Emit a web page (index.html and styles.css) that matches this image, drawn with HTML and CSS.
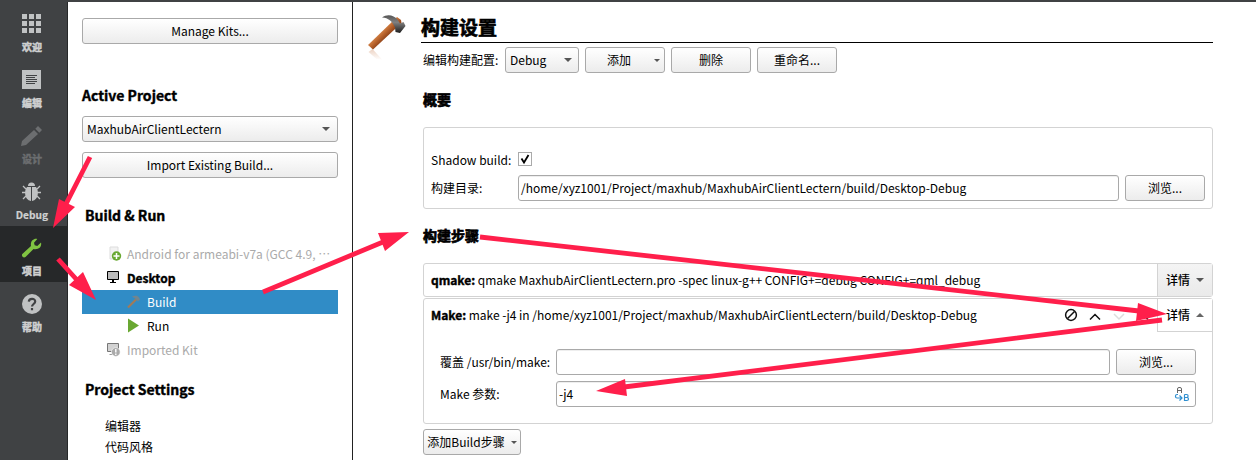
FILE: index.html
```html
<!DOCTYPE html>
<html lang="zh-CN">
<head>
<meta charset="utf-8">
<title>构建设置</title>
<link rel="stylesheet" href="styles.css">
</head>
<body>
<div class="window">
  <nav class="modes">
    <div class="mode"><svg width="20" height="20" viewBox="0 0 20 20" fill="#c0c2c3"><path d="M0 0h5v5H0zM7 0h5v5H7zM14 0h5v5h-5zM0 7h5v5H0zM7 7h5v5H7zM14 7h5v5h-5zM0 14h5v5H0zM7 14h5v5H7zM14 14h5v5h-5z"/></svg><span>欢迎</span></div>
    <div class="mode"><svg width="20" height="20" viewBox="0 0 20 20"><path fill="#c0c2c3" d="M0 0h19v19H0z"/><path stroke="#404244" d="M4 5.500h11M4 7.500h9M4 9.500h11M4 11.500h11M4 13.500h9"/></svg><span>编辑</span></div>
    <div class="mode disabled"><svg width="20" height="20" viewBox="0 0 20 20" fill="#6c6e70"><path d="M12 4l4 4L4 19l-5 1 1-5zM13.300 2.700L16 0l4 4-2.700 2.700z"/></svg><span>设计</span></div>
    <div class="mode"><svg width="20" height="20" viewBox="0 0 20 20"><path stroke="#c0c2c3" stroke-width="1.300" fill="none" d="M4 7L1 4M15 7l3-3M4 10.500H0M15 10.500h4M4 14l-3 3M15 14l3 3"/><path fill="#c0c2c3" d="M6 4a3.500 3.500 0 0 1 7 0zM9 5v14C2 18 2 8 5 5zM10 5v14c7-1 7-11 4-14z"/></svg><span class="latin">Debug</span></div>
    <div class="mode active"><svg width="20" height="20" viewBox="0 0 20 20"><path fill="#80c342" d="M19 4.500L15.300 8l-2.600-.7L12 4.700 15.300 1C12 0 8 3 9 8L.3 16C-1 18 1.500 20.500 3.500 19L11.500 11C17 12 20 8.500 19 4.500z"/></svg><span>项目</span></div>
    <div class="mode"><svg width="20" height="20" viewBox="0 0 20 20"><circle cx="10" cy="10" r="10" fill="#c0c2c3"/><path d="M6.800 7.600C7 3.800 13.300 4 13.200 7.500c0 2.400-3.200 2.600-3.200 5M10 14v2.200" fill="none" stroke="#404244" stroke-width="2.200"/></svg><span>帮助</span></div>
  </nav>

  <aside class="panel">
    <div class="button manage">Manage Kits...</div>
    <h2 class="head-active">Active Project</h2>
    <div class="button combo"><span>MaxhubAirClientLectern</span><i class="down"></i></div>
    <div class="button import">Import Existing Build...</div>
    <h2 class="head-run">Build &amp; Run</h2>
    <div class="tree">
      <div class="row muted"><svg width="16" height="16" viewBox="0 0 16 16"><path d="M3 1h8v12H3z" fill="#f2f2f2" stroke="#ddd"/><circle cx="9.500" cy="10" r="4.700" fill="#69a832"/><path d="M6.500 10h6M9.500 7v6" stroke="#fff" stroke-width="1.500"/></svg><span>Android for armeabi-v7a (GCC 4.9, ⋯</span></div>
      <div class="row strong"><svg width="16" height="16" viewBox="0 0 16 16"><path d="M.5 1.500h11v8H.5z" fill="#bbb" stroke="#000"/><path d="M5 10h2v2h2v1H3v-1h2z"/></svg><span>Desktop</span></div>
      <div class="row child selected"><svg width="16" height="16" viewBox="0 0 16 16"><path d="M1 13.500L9 5.500" stroke="#a07a58" stroke-width="2.200"/><path d="M5 2.500c3-1.500 6-1 7 1l1 2-2 2-3-3z" fill="#72858e"/></svg><span>Build</span></div>
      <div class="row child"><svg width="16" height="16" viewBox="0 0 16 16"><path d="M1 .5l11 7L1 14.500z" fill="#69a832"/></svg><span>Run</span></div>
      <div class="row muted"><svg width="16" height="16" viewBox="0 0 16 16"><path d="M.5 1.500h11v8H.5z" fill="#d2d2d2" stroke="#777"/><path d="M2.500 12.500h4" stroke="#999"/><circle cx="8.800" cy="10" r="4.400" fill="#aaa" stroke="#fff" stroke-width=".6"/><path d="M8.800 7v3.500M8.800 11.500V13" stroke="#fff" stroke-width="1.400"/></svg><span>Imported Kit</span></div>
    </div>
    <h2 class="head-settings">Project Settings</h2>
    <div class="setting">编辑器</div>
    <div class="setting">代码风格</div>
  </aside>

  <main class="main">
    <svg class="hammer" width="40" height="50" viewBox="0 0 40 50">
      <defs><linearGradient id="wood" gradientUnits="userSpaceOnUse" x1="14" y1="16" x2="20" y2="22"><stop offset="0" stop-color="#d88a50"/><stop offset=".5" stop-color="#bd682f"/><stop offset="1" stop-color="#96481c"/></linearGradient>
      <linearGradient id="steel" x1="0" y1="0" x2="0" y2="1"><stop offset="0" stop-color="#555"/><stop offset=".4" stop-color="#808080"/><stop offset="1" stop-color="#1c1c1c"/></linearGradient>
      <linearGradient id="fade" x1="0" y1="0" x2="0" y2="1"><stop offset="0" stop-color="#ecd2c2"/><stop offset="1" stop-color="#fff"/></linearGradient></defs>
      <path d="M1.500 38l4-3 10 11-6-1z" fill="url(#fade)"/>
      <path d="M30 3l4 3 .5 3L6 35.500 1 31z" fill="url(#wood)"/>
      <path d="M15 3.500C20-.5 27 1 30.500 5.500l2.500 4 3.500-1.500 2 4-5.500 7-4.500-1-.5-4.500C25 7 21.500 4 15 3.500z" fill="url(#steel)"/>
    </svg>
    <div class="content">
      <h1>构建设置</h1>
      <div class="config">
        <span class="config-label">编辑构建配置:</span>
        <div class="button config-combo"><span>Debug</span><i class="down"></i></div>
        <div class="button add"><span>添加</span><i class="down small"></i></div>
        <div class="button std">删除</div>
        <div class="button std">重命名...</div>
      </div>
      <h3 class="head-summary">概要</h3>
      <section class="box summary">
        <div class="line shadow"><label class="field-label">Shadow build:</label><span class="check"><svg width="12" height="12" viewBox="0 0 12 12"><path d="M2.500 5.500l2.500 4L9.500 2" fill="none" stroke="#000" stroke-width="1.800"/></svg></span></div>
        <div class="line"><label class="field-label">构建目录:</label><div class="input">/home/xyz1001/Project/maxhub/MaxhubAirClientLectern/build/Desktop-Debug</div><div class="button std">浏览...</div></div>
      </section>
      <h3 class="head-steps">构建步骤</h3>
      <section class="box step">
        <div class="step-text"><b>qmake:</b> <span>qmake MaxhubAirClientLectern.pro -spec linux-g++ CONFIG+=debug CONFIG+=qml_debug</span></div>
        <div class="detail"><span>详情</span><i class="down"></i></div>
      </section>
      <section class="box make">
        <div class="make-head">
          <div class="step-text"><b>Make:</b> <span>make -j4 in /home/xyz1001/Project/maxhub/MaxhubAirClientLectern/build/Desktop-Debug</span></div>
          <svg class="tools" width="86" height="16" viewBox="0 0 86 16" fill="none" stroke="#111" stroke-width="1.500"><circle cx="7" cy="7" r="5.400"/><path d="M3.500 10.500l7-7M26 11.500l5-5 5 5M74 11.500l5-5 5 5"/><path d="M50 6l5 5 5-5" stroke="#ddd"/></svg>
          <div class="detail open"><span>详情</span><i class="up"></i></div>
        </div>
        <div class="make-line"><label>覆盖 /usr/bin/make:</label><div class="input"></div><div class="button std">浏览...</div></div>
        <div class="make-line"><label>Make 参数:</label><div class="input args"><span>-j4</span><svg width="16" height="16" viewBox="0 0 16 16" fill="none"><path d="M3.500 7V3q0-1.500 1.500-1.500h1Q7.500 1.500 7.500 3v4M3.500 4.500h4" stroke="#666"/><path d="M4 8.500H3Q1.500 8.500 1.500 10v.5Q1.500 12 3 12h4.500M5.500 9.500L8 12l-2.500 2.500M10.500 8.500v6h2.300q1.700 0 1.700-1.500t-1.700-1.500h-2.300M10.500 8.500h2.100q1.500 0 1.500 1.500t-1.500 1.500" stroke="#2f8fd0" stroke-width="1.200"/></svg></div></div>
      </section>
      <div class="button add-step"><span>添加Build步骤</span><i class="down small"></i></div>
    </div>
  </main>

  <svg class="arrows" width="1256" height="460" viewBox="0 0 1256 460" fill="#ff1f4b" stroke="#ff1f4b">
    <g stroke-width="4.800"><path d="M90 157L66 204M58 259L77 280M263 292L383 242M480 237L1139 311M1162 320L624 387"/></g>
    <g stroke="none"><path d="M53 228L59 199L75 207zM96 300L69 285L83 272zM409 232L378 233L385 251zM1167 314L1138 303L1136 321zM596 391L625 379L627 396z"/></g>
  </svg>
</div>
</body>
</html>
```
FILE: styles.css
```css
* { box-sizing: border-box; }
body { margin: 0; }
.window {
  position: relative; display: flex; width: 1256px; height: 460px; overflow: hidden;
  border-top: 2px solid #404244; background: #fff; color: #000;
  font: 12px/18px "Noto Sans CJK SC", "Noto Sans", sans-serif;
  white-space: nowrap;
}
h1, h2, h3, b, .strong { margin: 0; font-weight: 700; -webkit-text-stroke: .4px #000; }
h1, h3 { -webkit-text-stroke-width: .7px; }
.modes { width: 68px; flex: none; background: #404244; border-right: 1px solid #262829; }
.mode { height: 56px; padding-top: 12px; display: flex; flex-direction: column; align-items: center; color: #cfd0d1; font-weight: 700; -webkit-text-stroke: .5px currentColor; font-size: 10px; line-height: 16px; }
.mode svg { flex: none; margin-left: -3px; overflow: visible; }
.mode span { margin-top: 5px; margin-left: -3px; }
.mode .latin { font-size: 10.2px; margin-top: 5px; -webkit-text-stroke-width: .2px; }
.mode.disabled { color: #6c6e70; }
.mode.active { background: #262829; }

.panel { width: 285px; flex: none; padding: 16px 14px 0; border-right: 1px solid #222; }
.button {
  height: 26px; flex: none; display: flex; align-items: center; justify-content: center;
  border: 1px solid #a9a9a9; border-radius: 3px; background: linear-gradient(#fff, #ececec);
}
.down, .up { border: 4px solid transparent; border-bottom: 0; border-top-color: #555; }
.up { border-top: 0; border-bottom: 4px solid #666; }
.down.small { border-width: 3px 3px 0; }
h2 { font-size: 14px; line-height: 20px; }
.head-active { margin: 41px 0 11px; }
.combo { justify-content: space-between; padding: 0 7px 0 4px; }
.import { margin-top: 10px; }
.head-run { margin: 27px 0 17px 3px; }
.row { height: 24px; display: flex; align-items: center; gap: 4px; padding-left: 25px; }
.row svg { flex: none; }
.muted { color: #aaa; }
.child { padding-left: 45px; }
.selected { background: #308cc6; color: #fff; }
.head-settings { margin: 17px 0 16px 3px; }
.setting { height: 21px; line-height: 21px; padding-left: 23px; }

.main { flex: 1; display: flex; padding: 12px 0 0 14px; }
.hammer { flex: none; }
.content { width: 792px; margin-left: 14px; }
h1 { height: 29px; font-size: 19px; line-height: 26px; border-bottom: 1px solid #000; }
.config { display: flex; align-items: center; gap: 6px; margin: 4px 0 0 2px; }
.config-label { width: 76px; }
.config-combo { width: 74px; justify-content: space-between; padding: 0 6px 0 4px; }
.add { width: 80px; justify-content: flex-end; gap: 23px; padding-right: 4px; }
.std { width: 80px; }
h3 { font-size: 14px; line-height: 20px; margin-left: 2px; }
.head-summary { margin-top: 16px; }
.box { width: 790px; margin-left: 2px; border: 1px solid #d3d3d3; border-radius: 3px; }
.summary { height: 82px; margin-top: 18px; padding: 22px 7px 0; }
.line { display: flex; align-items: center; gap: 6px; height: 26px; }
.shadow { height: 20px; margin-bottom: 5px; }
.field-label { width: 81px; }
.check { width: 14px; height: 14px; border: 1px solid #aaa; display: flex; margin-bottom: 2px; }
.input { height: 26px; flex: 1; display: flex; align-items: center; border: 1px solid #a9a9a9; border-radius: 3px; padding-left: 2px; box-shadow: inset 0 1px #eee; }
.head-steps { margin-top: 16px; }
.step { height: 34px; margin-top: 18px; display: flex; }
.step-text { flex: 1; padding-left: 7px; line-height: 32px; letter-spacing: -.01px; }
.detail { width: 55px; flex: none; display: flex; align-items: center; justify-content: space-between; padding: 0 8px; border-left: 1px solid #d3d3d3; background: linear-gradient(#f4f4f4, #eaeaea); font-weight: 500; }
.detail.open { background: #fff; border-bottom: 1px solid #d3d3d3; }
.make { height: 126px; margin-top: 1px; }
.make-head { height: 33px; display: flex; align-items: stretch; margin-bottom: 17px; }
.tools { flex: none; align-self: center; margin-right: 7px; }
.make-line { display: flex; align-items: center; gap: 6px; padding: 0 16px; margin-bottom: 6px; }
.make-line label { width: 110px; }
.args { justify-content: space-between; padding-right: 5px; }
.add-step { width: 98px; margin: 5px 0 0 2px; gap: 6px; }
.arrows { position: absolute; left: 0; top: -2px; }
```
